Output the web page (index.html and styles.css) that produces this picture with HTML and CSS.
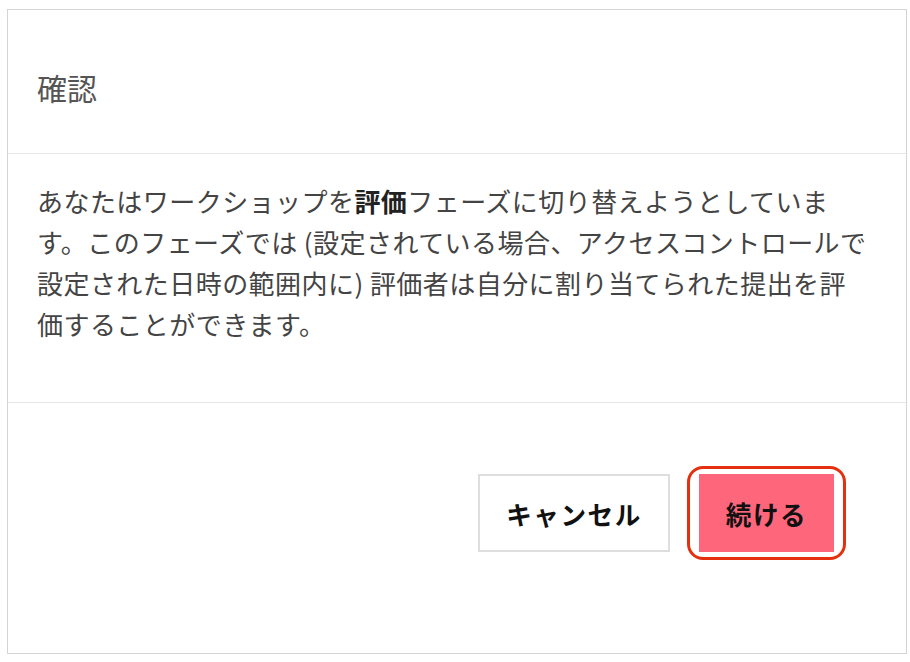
FILE: index.html
```html
<!DOCTYPE html>
<html lang="ja">
<head>
<meta charset="utf-8">
<title>確認</title>
<link rel="stylesheet" href="styles.css">
</head>
<body>
<div class="dialog">
  <div class="dialog-header">
    <h2 class="dialog-title">確認</h2>
  </div>
  <div class="dialog-body">
    <p class="dialog-text">あなたはワークショップを<strong>評価</strong>フェーズに切り替えようとしています。このフェーズでは (設定されている場合、アクセスコントロールで設定された日時の範囲内に) 評価者は自分に割り当てられた提出を評価することができます。</p>
  </div>
  <div class="dialog-footer">
    <button class="btn btn-secondary" type="button">キャンセル</button>
    <button class="btn btn-primary btn-focused" type="button">続ける</button>
  </div>
</div>
</body>
</html>
```

FILE: styles.css
```css
html, body {
  margin: 0;
  padding: 0;
  background: #ffffff;
}

body {
  font-family: "Noto Sans CJK JP", "Noto Sans", sans-serif;
  color: #444444;
  padding: 9px 3px 0 7px;
}

.dialog {
  width: 898px;
  height: 643px;
  border: 1px solid #d4d4d4;
  display: flex;
  flex-direction: column;
  box-sizing: content-box;
}

.dialog-header {
  height: 144px;
  box-sizing: border-box;
  border-bottom: 1px solid #e6e6e6;
  display: flex;
  align-items: center;
  padding: 10px 29px 0;
}

.dialog-title {
  margin: 0;
  font-size: 30px;
  font-weight: 400;
  color: #555555;
  line-height: 1.2;
}

.dialog-body {
  height: 249px;
  border-bottom: 1px solid #e6e6e6;
  padding: 26px 36px 0 29px;
  box-sizing: border-box;
}

.dialog-text {
  margin: 0;
  font-size: 26px;
  letter-spacing: 0.45px;
  line-height: 41px;
  color: #444444;
}

.dialog-text strong {
  font-weight: 700;
  color: #222222;
}

.dialog-footer {
  flex: 1;
  display: flex;
  justify-content: flex-end;
  align-items: flex-start;
  gap: 29px;
  padding: 71px 72px 0 0;
}

.btn {
  font-family: "Noto Sans CJK JP", "Noto Sans", sans-serif;
  font-size: 25.6px;
  font-weight: 700;
  color: #111111;
  height: 78px;
  box-sizing: border-box;
  letter-spacing: 1.5px;
  cursor: pointer;
  position: relative;
}

.btn-secondary {
  width: 192px;
  background: #ffffff;
  border: 2px solid #dedede;
}

.btn-primary {
  width: 135px;
  background: #fe667b;
  border: none;
}

.btn-focused::after {
  content: "";
  position: absolute;
  top: -8px;
  bottom: -8px;
  left: -12px;
  right: -12px;
  border: 3px solid #e4300f;
  border-radius: 16px;
}
```
